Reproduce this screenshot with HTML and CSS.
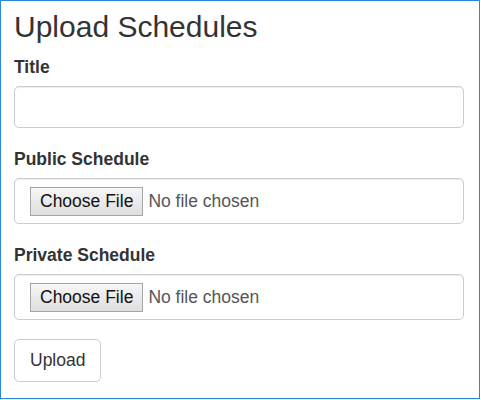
FILE: index.html
```html
<!DOCTYPE html>
<html lang="en">
<head>
<meta charset="utf-8">
<title>Upload Schedules</title>
<link rel="stylesheet" href="styles.css">
</head>
<body>
<div class="frame">
  <h1 class="page-title">Upload Schedules</h1>
  <form class="upload-form">
    <div class="form-group">
      <label class="field-label" for="title">Title</label>
      <input class="form-control" type="text" id="title">
    </div>
    <div class="form-group">
      <label class="field-label" for="public">Public Schedule</label>
      <input class="form-control file-control" type="file" id="public">
    </div>
    <div class="form-group">
      <label class="field-label" for="private">Private Schedule</label>
      <input class="form-control file-control" type="file" id="private">
    </div>
    <button class="btn" type="button">Upload</button>
  </form>
</div>
</body>
</html>
```
FILE: styles.css
```css
* { box-sizing: border-box; }
html, body { margin: 0; padding: 0; background: #fff; }
body {
  font-family: "Liberation Sans", Arial, Helvetica, sans-serif;
  font-size: 17.5px;
  line-height: 25px;
  color: #333;
}
.frame {
  width: 480px;
  height: 399px;
  border: 1px solid #2a86d8;
  padding: 9px 15px 0 13px;
  overflow: hidden;
}
.page-title {
  margin: 0 0 11.5px 0;
  font-size: 30px;
  font-weight: 400;
  line-height: 33px;
  color: #333;
}
.form-group { margin-bottom: 18.75px; }
.field-label {
  display: block;
  font-weight: 700;
  margin-bottom: 6.25px;
}
.form-control {
  display: block;
  width: 100%;
  height: 42.5px;
  padding: 7.5px 15px;
  font-family: inherit;
  font-size: 17.5px;
  line-height: 25px;
  color: #555;
  background: #fff;
  border: 1px solid #ccc;
  border-radius: 5px;
  box-shadow: inset 0 1px 1px rgba(0,0,0,.075);
  margin: 0;
}
.file-control {
  height: 46px;
  padding: 7.5px 15px;
  line-height: 29px;
}
.file-control::file-selector-button {
  height: 29px;
  padding: 0 9px;
  margin: 0 5px 0 0;
  font-family: "Liberation Sans", Arial, sans-serif;
  font-size: 17.5px;
  color: #111;
  border: 1px solid #a5a5a5;
  border-radius: 0;
  background: linear-gradient(#f7f7f7, #dedede);
  vertical-align: top;
}
.btn {
  display: inline-block;
  height: 42.5px;
  padding: 7.5px 15px;
  margin: 0;
  font-family: inherit;
  font-size: 17.5px;
  line-height: 25px;
  color: #333;
  background: #fff;
  border: 1px solid #ccc;
  border-radius: 5px;
}
```
